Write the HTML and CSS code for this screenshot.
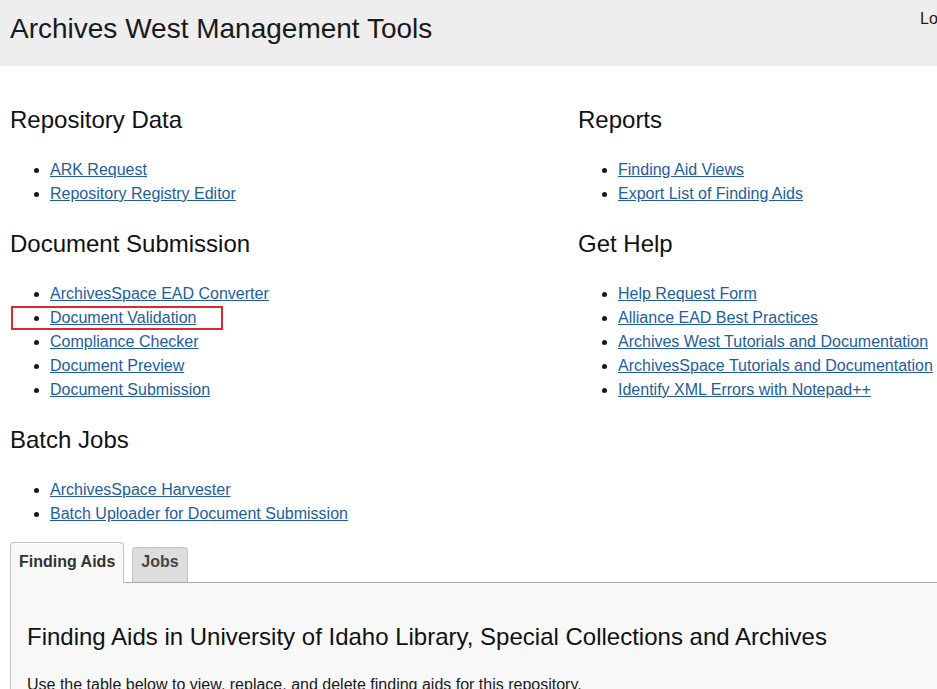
FILE: index.html
```html
<!DOCTYPE html>
<html lang="en">
<head>
<meta charset="utf-8">
<title>Archives West Management Tools</title>
<link rel="stylesheet" href="styles.css">
</head>
<body>
<div class="page">
  <header class="topbar">
    <h1 class="site-title">Archives West Management Tools</h1>
    <a class="logout" href="#">Logout</a>
  </header>

  <main class="content">
    <div class="sections">
      <section class="section">
        <h3 class="section-title">Repository Data</h3>
        <ul class="link-list">
          <li><a href="#">ARK Request</a></li>
          <li><a href="#">Repository Registry Editor</a></li>
        </ul>
      </section>
      <section class="section">
        <h3 class="section-title">Reports</h3>
        <ul class="link-list">
          <li><a href="#">Finding Aid Views</a></li>
          <li><a href="#">Export List of Finding Aids</a></li>
        </ul>
      </section>
      <section class="section">
        <h3 class="section-title">Document Submission</h3>
        <ul class="link-list">
          <li><a href="#">ArchivesSpace EAD Converter</a></li>
          <li class="highlighted"><a href="#">Document Validation</a></li>
          <li><a href="#">Compliance Checker</a></li>
          <li><a href="#">Document Preview</a></li>
          <li><a href="#">Document Submission</a></li>
        </ul>
      </section>
      <section class="section">
        <h3 class="section-title">Get Help</h3>
        <ul class="link-list">
          <li><a href="#">Help Request Form</a></li>
          <li><a href="#">Alliance EAD Best Practices</a></li>
          <li><a href="#">Archives West Tutorials and Documentation</a></li>
          <li><a href="#">ArchivesSpace Tutorials and Documentation</a></li>
          <li><a href="#">Identify XML Errors with Notepad++</a></li>
        </ul>
      </section>
      <section class="section">
        <h3 class="section-title">Batch Jobs</h3>
        <ul class="link-list">
          <li><a href="#">ArchivesSpace Harvester</a></li>
          <li><a href="#">Batch Uploader for Document Submission</a></li>
        </ul>
      </section>
    </div>

    <div class="tabs">
      <ul class="tab-nav">
        <li class="tab tab-active"><a href="#">Finding Aids</a></li>
        <li class="tab"><a href="#">Jobs</a></li>
      </ul>
      <div class="tab-panel">
        <h3 class="section-title">Finding Aids in University of Idaho Library, Special Collections and Archives</h3>
        <p class="panel-text">Use the table below to view, replace, and delete finding aids for this repository.</p>
      </div>
    </div>
  </main>
</div>
</body>
</html>
```

FILE: styles.css
```css
html, body {
  margin: 0;
  padding: 0;
  overflow: hidden;
  background: #ffffff;
}

body {
  font-family: "Liberation Sans", Arial, sans-serif;
  font-size: 16px;
  color: #1a1a1a;
}

.page {
  width: 1150px;
}

.topbar {
  background: #eeeeee;
  height: 66px;
  display: grid;
  grid-template-columns: 910px auto;
  padding-left: 10px;
  margin-bottom: 16px;
}

.site-title {
  margin: 0;
  font-size: 28px;
  font-weight: normal;
  line-height: 32px;
  padding-top: 13px;
  color: #1a1a1a;
}

.logout {
  color: #1a1a1a;
  text-decoration: none;
  font-size: 16px;
  line-height: 18px;
  padding-top: 10px;
}

.content {
  padding-left: 10px;
}

.sections {
  display: grid;
  grid-template-columns: 568px 568px;
  align-items: start;
}

.section-title {
  font-size: 24px;
  font-weight: normal;
  line-height: 26.4px;
  margin: 25px 0 0;
  color: #111111;
}

.link-list {
  margin: 24.6px 0 0;
  padding-left: 40px;
  line-height: 24px;
  list-style: disc;
}

.link-list a {
  color: #1f5d9c;
  text-decoration: underline;
}

.highlighted {
  position: relative;
}

.highlighted::before {
  content: "";
  position: absolute;
  left: -39px;
  top: 0;
  width: 212px;
  height: 24px;
  box-sizing: border-box;
  border: 2px solid #dc2a2e;
}

.tabs {
  margin-top: 15.5px;
}

.tab-nav {
  display: flex;
  align-items: flex-end;
  gap: 8px;
  list-style: none;
  margin: 0;
  padding: 0;
  position: relative;
  z-index: 1;
}

.tab {
  border: 1px solid #c2c2c2;
  border-bottom: none;
  border-radius: 4px 4px 0 0;
  background: #dddddd;
  padding: 4px 8px 10px;
  line-height: 20px;
}

.tab a {
  color: #444444;
  font-weight: bold;
  text-decoration: none;
}

.tab-active {
  background: #f8f8f8;
  padding: 9px 8px 11px;
  margin-bottom: -1px;
}

.tab-active a {
  color: #333333;
}

.tab-panel {
  background: #f8f8f8;
  border-top: 1px solid #a9a9a9;
  border-left: 1px solid #c2c2c2;
  padding: 16px 16px 20px;
  min-height: 200px;
}

.tab-panel .section-title {
  margin-top: 25px;
}

.panel-text {
  margin: 23.5px 0 0;
  line-height: 24px;
}
```
